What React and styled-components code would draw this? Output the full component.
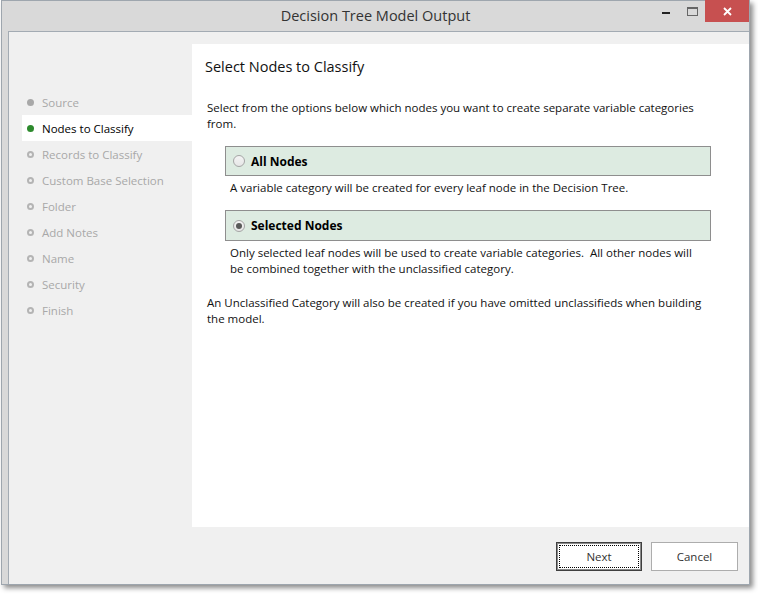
import React from "react";
import styled, { createGlobalStyle } from "styled-components";

const GlobalStyle = createGlobalStyle`
  html, body {
    margin: 0;
    padding: 0;
    background: #ffffff;
  }
  body {
    font-family: "Open Sans", "Noto Sans", sans-serif;
  }
`;

const Page = styled.div`
  width: 758px;
  height: 594px;
  padding-left: 1px;
  box-sizing: border-box;
`;

const Window = styled.div`
  width: 749px;
  height: 585px;
  box-sizing: border-box;
  border: 1px solid #9ea6ae;
  background: #d9d9d9;
  display: flex;
  flex-direction: column;
  box-shadow: 3px 3px 5px rgba(0, 0, 0, 0.45);
`;

const TitleBar = styled.div`
  height: 30px;
  display: grid;
  grid-template-columns: 1fr auto 1fr;
  align-items: start;
`;

const Title = styled.div`
  grid-column: 2;
  font-size: 14.5px;
  line-height: 30px;
  color: #333;
`;

const Controls = styled.div`
  grid-column: 3;
  justify-self: end;
  display: flex;
  margin-top: -1px;
`;

const Ctrl = styled.div`
  width: ${(p) => (p.$close ? 44 : 26)}px;
  height: 22px;
  display: flex;
  align-items: center;
  justify-content: center;
  background: ${(p) => (p.$close ? "#c75050" : "transparent")};
`;

const Client = styled.div`
  flex: 1;
  margin-left: 6px;
  border-left: 1px solid #a3abb3;
  border-top: 1px solid #a3abb3;
  background: #f0f0f0;
  padding-top: 12px;
  display: flex;
  flex-direction: column;
`;

const Main = styled.div`
  height: 483px;
  display: flex;
`;

const Nav = styled.div`
  width: 183px;
  padding-top: 45px;
  display: flex;
  flex-direction: column;
`;

const NavItem = styled.div`
  height: 26px;
  margin-left: 13px;
  padding-left: 5px;
  display: flex;
  align-items: center;
  gap: 8px;
  font-size: 11.5px;
  color: ${(p) => (p.$active ? "#000" : "#a8a8a8")};
  background: ${(p) => (p.$active ? "#fff" : "transparent")};
`;

const Bullet = styled.span`
  width: 7px;
  height: 7px;
  border-radius: 50%;
  box-sizing: border-box;
  flex-shrink: 0;
  ${(p) =>
    p.$kind === "active"
      ? "background: #2d8a2d;"
      : p.$kind === "done"
      ? "background: #a8a8a8;"
      : "border: 2px solid #b4b4b4;"}
`;

const Panel = styled.div`
  flex: 1;
  background: #fff;
  padding: 13px 0 0 13px;
`;

const Heading = styled.h1`
  margin: 0;
  font-size: 14.5px;
  font-weight: 400;
  line-height: 20px;
  color: #111;
`;

const Body = styled.div`
  margin-top: 23px;
  padding-left: 2px;
  width: 500px;
`;

const Para = styled.p`
  margin: 0;
  font-size: 11.5px;
  line-height: 16px;
  color: #111;
`;

const Options = styled.div`
  margin: 14px 0 0 18px;
  width: 486px;
  display: flex;
  flex-direction: column;
`;

const OptionBox = styled.div`
  height: ${(p) => p.$h}px;
  box-sizing: border-box;
  border: 1px solid #8e8e8e;
  background: #ddebe1;
  display: flex;
  align-items: center;
  gap: 6px;
  padding-left: 7px;
  font-size: 12px;
  font-weight: 700;
  color: #000;
`;

const Radio = styled.span`
  width: 12px;
  height: 12px;
  border-radius: 50%;
  box-sizing: border-box;
  border: 1px solid #a5a5a5;
  background: linear-gradient(#f4f4f4, #e6e6e6);
  display: flex;
  align-items: center;
  justify-content: center;
  &::after {
    content: "";
    width: 6px;
    height: 6px;
    border-radius: 50%;
    background: ${(p) => (p.$checked ? "#5a5a5a" : "transparent")};
  }
`;

const OptionDesc = styled(Para)`
  margin: 4px 0 14px 5px;
  white-space: nowrap;
`;

const Note = styled(Para)`
  margin-top: 4px;
  white-space: nowrap;
`;

const Footer = styled.div`
  flex: 1;
  display: flex;
  justify-content: flex-end;
  align-items: flex-start;
  gap: 9px;
  padding: 15px 11px 0 0;
`;

const Button = styled.button`
  position: relative;
  width: ${(p) => p.$w}px;
  height: 29px;
  box-sizing: border-box;
  background: #fff;
  font-family: inherit;
  font-size: 11.5px;
  color: #333;
  border: 1px solid ${(p) => (p.$default ? "#3f3f3f" : "#adadad")};
  box-shadow: ${(p) => (p.$default ? "inset 0 0 0 1px #8a8a8a" : "none")};
  ${(p) =>
    p.$default &&
    `&::after {
      content: "";
      position: absolute;
      inset: 2px;
      border: 1px dotted #000;
    }`}
`;

const steps = [
  { label: "Source", kind: "done" },
  { label: "Nodes to Classify", kind: "active" },
  { label: "Records to Classify" },
  { label: "Custom Base Selection" },
  { label: "Folder" },
  { label: "Add Notes" },
  { label: "Name" },
  { label: "Security" },
  { label: "Finish" },
];

export default function App() {
  return (
    <>
      <GlobalStyle />
      <Page>
        <Window>
          <TitleBar>
            <Title>Decision Tree Model Output</Title>
            <Controls>
              <Ctrl>
                <svg width="10" height="10" viewBox="0 0 10 10">
                  <rect x="1" y="6" width="8" height="2" fill="#222" />
                </svg>
              </Ctrl>
              <Ctrl>
                <svg width="11" height="9" viewBox="0 0 11 9">
                  <rect x="0.5" y="0.5" width="10" height="8" fill="none" stroke="#666" />
                  <rect x="0.5" y="0.5" width="10" height="1.5" fill="#666" />
                </svg>
              </Ctrl>
              <Ctrl $close>
                <svg width="9" height="9" viewBox="0 0 9 9">
                  <path d="M1 1 L8 8 M8 1 L1 8" stroke="#fff" strokeWidth="1.8" />
                </svg>
              </Ctrl>
            </Controls>
          </TitleBar>
          <Client>
            <Main>
              <Nav>
                {steps.map((s) => (
                  <NavItem key={s.label} $active={s.kind === "active"}>
                    <Bullet $kind={s.kind} />
                    {s.label}
                  </NavItem>
                ))}
              </Nav>
              <Panel>
                <Heading>Select Nodes to Classify</Heading>
                <Body>
                  <Para>
                    Select from the options below which nodes you want to create separate variable categories
                    <br />
                    from.
                  </Para>
                  <Options>
                    <OptionBox $h={30}>
                      <Radio />
                      All Nodes
                    </OptionBox>
                    <OptionDesc>A variable category will be created for every leaf node in the Decision Tree.</OptionDesc>
                    <OptionBox $h={31}>
                      <Radio $checked />
                      Selected Nodes
                    </OptionBox>
                    <OptionDesc>
                      Only selected leaf nodes will be used to create variable categories.&nbsp; All other nodes will
                      <br />
                      be combined together with the unclassified category.
                    </OptionDesc>
                  </Options>
                  <Note>
                    An Unclassified Category will also be created if you have omitted unclassifieds when building
                    <br />
                    the model.
                  </Note>
                </Body>
              </Panel>
            </Main>
            <Footer>
              <Button $w={86} $default>Next</Button>
              <Button $w={87}>Cancel</Button>
            </Footer>
          </Client>
        </Window>
      </Page>
    </>
  );
}
